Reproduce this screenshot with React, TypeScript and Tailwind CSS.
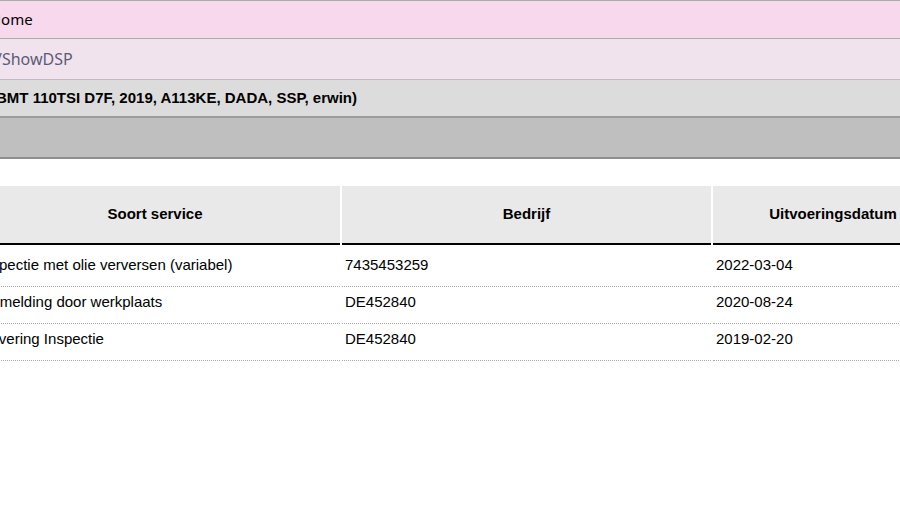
const rows = [
  { service: "Inspectie met olie verversen (variabel)", bedrijf: "7435453259", datum: "2022-03-04" },
  { service: "Aanmelding door werkplaats", bedrijf: "DE452840", datum: "2020-08-24" },
  { service: "Aflevering Inspectie", bedrijf: "DE452840", datum: "2019-02-20" },
];

export default function App() {
  return (
    <div className="w-[900px] h-[512px] overflow-hidden bg-white font-['Liberation_Sans',Arial,sans-serif] text-black">
      {/* Breadcrumb bars */}
      <div className="h-[39px] border-t border-b border-[#b1a8ae] bg-[#f8d8ec] flex items-center">
        <span className="ml-[-10px] text-[15px] font-['Noto_Sans',sans-serif]">Home</span>
      </div>
      <div className="h-[41px] border-b border-[#c2b9c0] bg-[#f1e3ee] flex items-center">
        <span className="ml-[-4px] text-[16px] text-[#5c5a78] font-['Noto_Sans',sans-serif]">/ShowDSP</span>
      </div>
      <div className="h-[38px] border-b-2 border-[#9c9c9c] bg-[#dcdcdc] flex items-center">
        <span className="ml-[-4px] text-[15px] font-bold whitespace-nowrap">
          BMT 110TSI D7F, 2019, A113KE, DADA, SSP, erwin)
        </span>
      </div>
      <div className="h-[41px] border-b-2 border-[#8e8e8e] bg-[#bfbfbf]" />

      {/* Service history */}
      <table className="mt-[27px] ml-[-32px] w-[987px] table-fixed border-separate border-spacing-x-[2px] border-spacing-y-0 text-[15px]">
        <colgroup>
          <col className="w-[370px]" />
          <col className="w-[369px]" />
          <col className="w-[240px]" />
        </colgroup>
        <thead>
          <tr>
            <th className="h-[59px] bg-[#e9e9e9] border-b-2 border-black font-bold text-center align-middle">Soort service</th>
            <th className="h-[59px] bg-[#e9e9e9] border-b-2 border-black font-bold text-center align-middle">Bedrijf</th>
            <th className="h-[59px] bg-[#e9e9e9] border-b-2 border-black font-bold text-center align-middle">Uitvoeringsdatum</th>
          </tr>
        </thead>
        <tbody>
          {rows.map((r, i) => (
            <tr key={i}>
              {[r.service, r.bedrijf, r.datum].map((v, j) => (
                <td
                  key={j}
                  className={
                    "border-b border-dotted border-[#a8a8a8] align-top leading-[17px] " +
                    (i === 0 && j === 0 ? "pl-[9px] " : "pl-[3px] ") +
                    (i === 0 ? "h-[42px] pt-[11px]" : "h-[37px] pt-[6px]")
                  }
                >
                  {v}
                </td>
              ))}
            </tr>
          ))}
        </tbody>
      </table>
    </div>
  );
}
